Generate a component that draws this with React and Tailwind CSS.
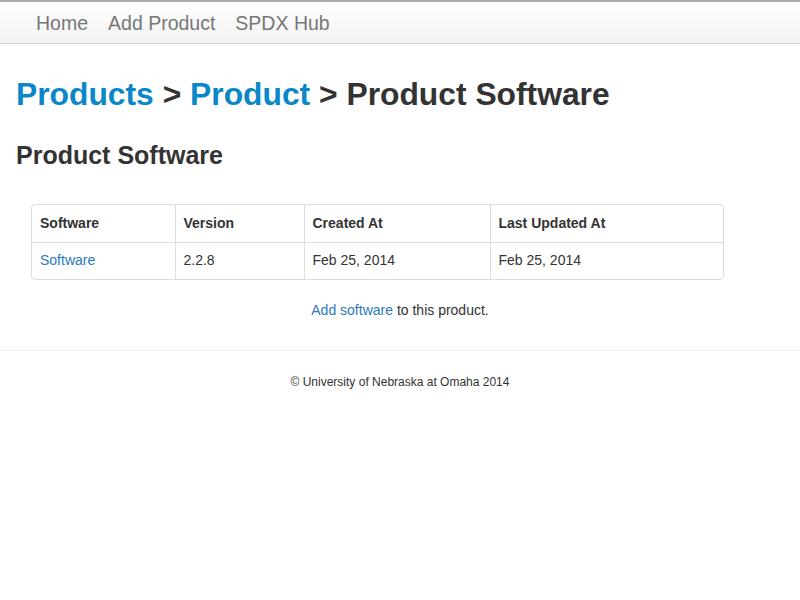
import React from "react";

const rows = [
  { name: "Software", version: "2.2.8", created: "Feb 25, 2014", updated: "Feb 25, 2014" },
];

export default function App() {
  return (
    <div className="min-h-[600px] bg-white text-[#333] font-['Liberation_Sans',Arial,sans-serif]">
      {/* navbar */}
      <div className="h-[44px] border-t-2 border-[#aaa] border-b border-b-[#d4d4d4] bg-gradient-to-b from-white to-[#f2f2f2]">
        <div className="flex items-center h-full pt-[3px] pl-[36px] gap-[20px] text-[19.5px] text-[#777]">
          <span>Home</span>
          <span>Add Product</span>
          <span>SPDX Hub</span>
        </div>
      </div>

      <div className="px-[16px]">
        <h1 className="mt-[30px] text-[31.8px] leading-[40px] font-bold">
          <span className="text-[#0a87c9]">Products</span>
          <span> &gt; </span>
          <span className="text-[#0a87c9]">Product</span>
          <span> &gt; Product Software</span>
        </h1>
        <h2 className="mt-[26px] text-[25px] leading-[30px] font-bold">Product Software</h2>

        <div className="mt-[34px] mx-[15px] w-[693px] border border-[#ddd] rounded-[4px] overflow-hidden">
          <table className="w-full border-collapse text-[14px]">
            <thead>
              <tr className="h-[37px] text-left">
                <th className="w-[143px] px-[8px] font-bold border-r border-[#ddd]">Software</th>
                <th className="w-[129px] px-[8px] font-bold border-r border-[#ddd]">Version</th>
                <th className="w-[186px] px-[8px] font-bold border-r border-[#ddd]">Created At</th>
                <th className="px-[8px] font-bold">Last Updated At</th>
              </tr>
            </thead>
            <tbody>
              {rows.map((r) => (
                <tr key={r.name} className="h-[37px] border-t border-[#ddd]">
                  <td className="px-[8px] border-r border-[#ddd] text-[#2a7ab8]">{r.name}</td>
                  <td className="px-[8px] border-r border-[#ddd]">{r.version}</td>
                  <td className="px-[8px] border-r border-[#ddd]">{r.created}</td>
                  <td className="px-[8px]">{r.updated}</td>
                </tr>
              ))}
            </tbody>
          </table>
        </div>

        <p className="mt-[20px] text-center text-[14px] leading-[20px]">
          <span className="text-[#2a7ab8]">Add software</span> to this product.
        </p>
      </div>

      <div className="mt-[30px] border-t border-[#eee]" />
      <p className="mt-[22px] text-center text-[12px] leading-[18px]">© University of Nebraska at Omaha 2014</p>
    </div>
  );
}
